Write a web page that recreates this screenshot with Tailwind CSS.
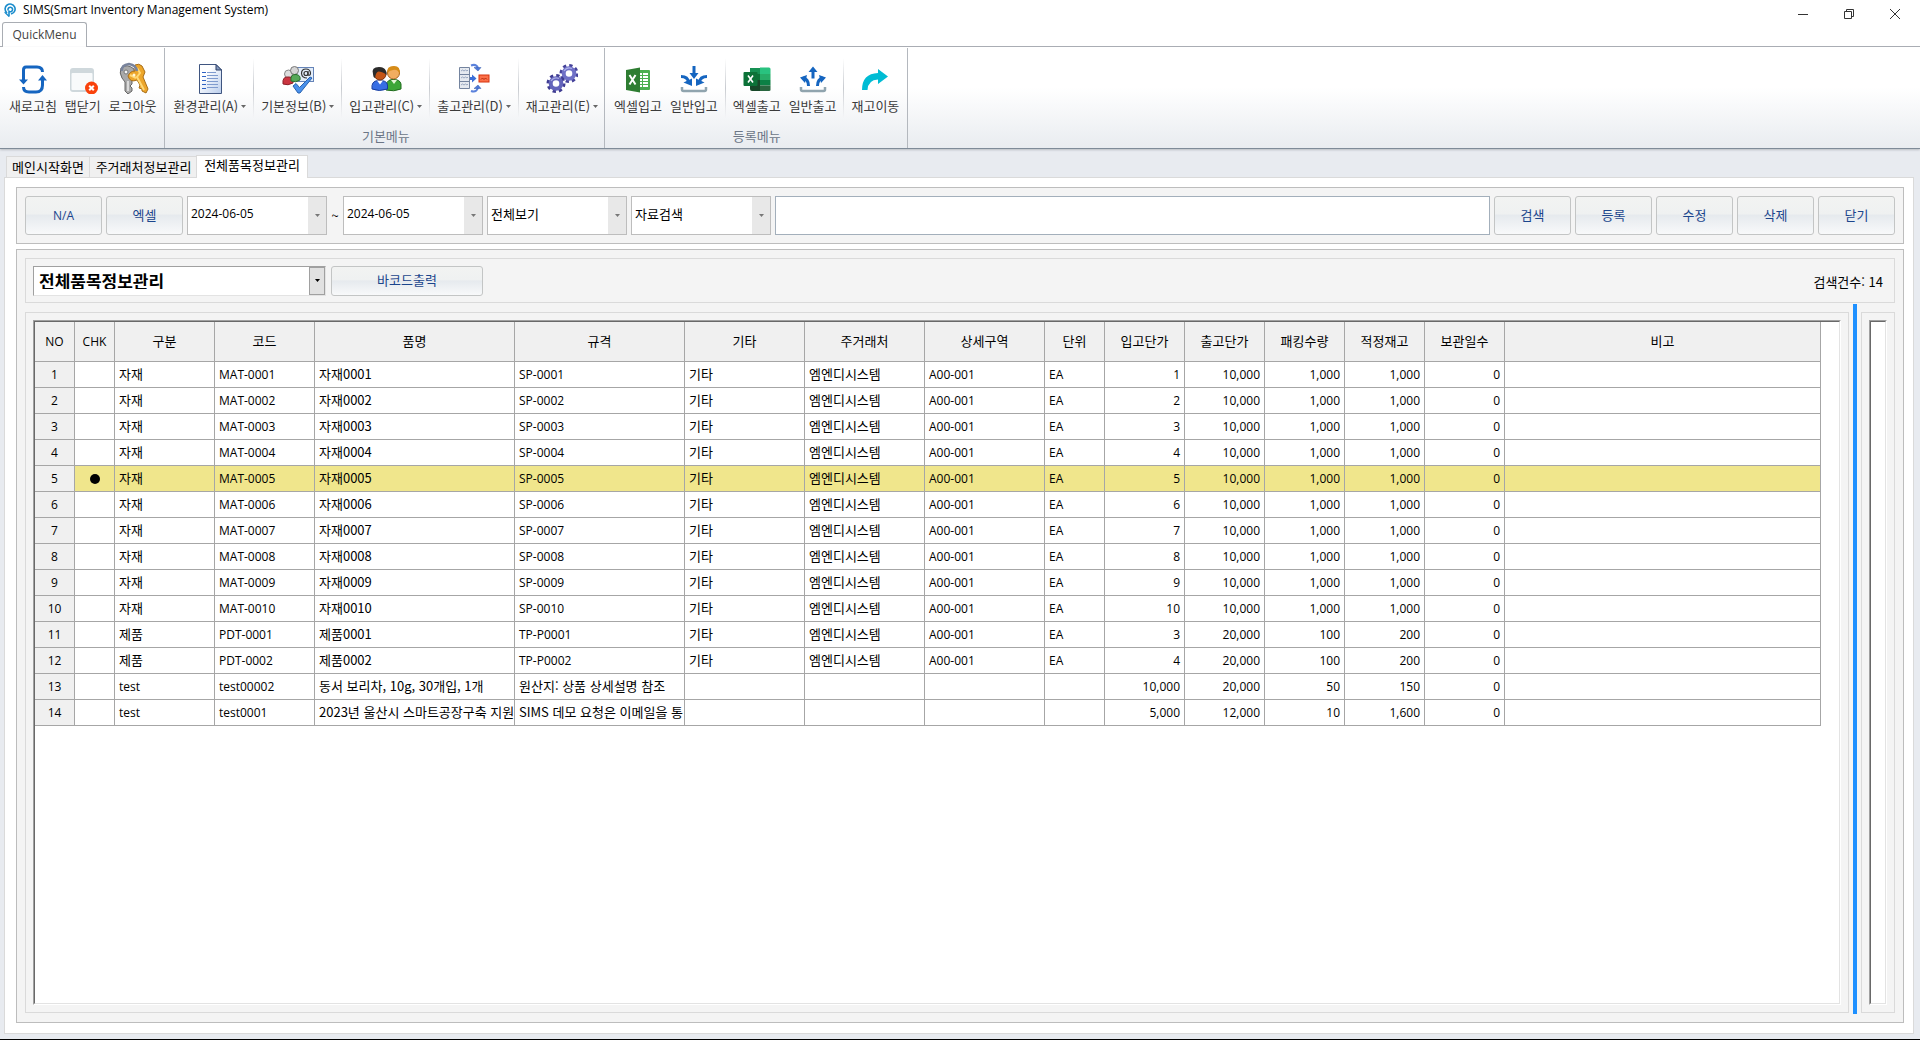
<!DOCTYPE html>
<html lang="ko">
<head>
    <meta charset="UTF-8">
    <meta name="viewport" content="width=device-width, initial-scale=1.0">
    <title>SIMS(Smart Inventory Management System)</title>
    <script src="https://cdn.jsdelivr.net/npm/@tailwindcss/browser@4"></script>
</head>
<body class="min-h-screen flex flex-col bg-[#e8ebf0] border-b border-black text-black text-[13px] leading-4 font-['Noto_Sans_CJK_KR',sans-serif]">
    <!-- Title bar -->
    <header class="bg-white h-[22px] flex justify-between">
        <div class="flex items-center pl-1 gap-[7px] h-5">
            <svg class="w-3 h-[14px]" viewBox="0 0 12 14" fill="none" stroke="#1a8ccc" stroke-width="1.6" stroke-linecap="round">
                <path d="M2.600 9.600A5 5 0 1 1 7.600 10.800"/>
                <path d="M5 8V13M5 8.400A2.300 2.300 0 1 0 4 6.800"/>
                <path d="M1 9.500L4.600 13" stroke-width="1.2"/>
            </svg>
            <h1 class="text-xs font-['Open_Sans','Noto_Sans_CJK_KR',sans-serif]">SIMS(Smart Inventory Management System)</h1>
        </div>
        <div class="flex h-7 pr-[2px] z-10">
            <button type="button" aria-label="최소화" class="w-[46px] flex justify-center items-center">
                <svg class="w-[10px] h-[10px]" viewBox="0 0 10 10" stroke="#333"><path d="M0 5.500H10"/></svg>
            </button>
            <button type="button" aria-label="이전 크기로" class="w-[46px] flex justify-center items-center">
                <svg class="w-[10px] h-[10px]" viewBox="0 0 10 10" fill="none" stroke="#333"><path d="M.5 2.500h7v7h-7zM2.500 2.500v-2h7v7h-2"/></svg>
            </button>
            <button type="button" aria-label="창 닫기" class="w-[46px] flex justify-center items-center">
                <svg class="w-[10px] h-[10px]" viewBox="0 0 10 10" stroke="#333"><path d="M0 0L10 10M10 0L0 10"/></svg>
            </button>
        </div>
    </header>

    <!-- Ribbon tab -->
    <div class="bg-white flex items-end h-[25px]">
        <div class="w-[2px] border-b border-[#a9adb3]"></div>
        <button type="button" class="h-[25px] w-[85px] text-xs text-[#444] border border-b-0 border-[#a9adb3] rounded-t-[3px] font-['Open_Sans','Noto_Sans_CJK_KR',sans-serif]">QuickMenu</button>
        <div class="flex-1 border-b border-[#a9adb3]"></div>
    </div>

    <!-- Ribbon -->
    <nav class="h-[102px] pt-px flex bg-linear-to-b from-white from-40% to-[#e9ecf0] border-b border-[#7f8b98] shadow-[0_1px_2px_#b8bcc2] text-[#3b3b3b]">
        <section class="pl-[5px] pr-[3px] pt-[10px] border-r border-[#b4b8be]">
            <div class="flex items-center h-[60px]">
                <button type="button" class="px-1 flex flex-col items-center gap-1">
                    <svg class="w-8 h-8" viewBox="0 0 32 32" fill="none" stroke="#1565c0" stroke-width="3">
                        <path d="M12.500 5H9Q6.500 5 6.500 8V19M10.500 5H20Q25.500 5 25.500 10"/>
                        <path d="M25.500 17V23Q25.500 30 19 30H12Q6.500 30 6.500 25"/>
                        <path d="M2 17.500h9L6.500 22.500zM21 18.500h9L25.500 13z" fill="#1565c0" stroke="none"/>
                    </svg>
                    <span>새로고침</span>
                </button>
                <button type="button" class="px-1 flex flex-col items-center gap-1">
                    <svg class="w-8 h-8" viewBox="0 0 32 32">
                        <rect x="3" y="6" width="24" height="24" rx="3" fill="#cfd8dc"/>
                        <rect x="4.500" y="11" width="21" height="17" rx="1" fill="#f8fafb"/>
                        <circle cx="24.500" cy="26" r="6.500" fill="#f9420c"/>
                        <path d="M22.200 23.700l4.600 4.600M26.800 23.700l-4.600 4.600" stroke="#fff" stroke-width="2"/>
                    </svg>
                    <span>탭닫기</span>
                </button>
                <button type="button" class="px-1 flex flex-col items-center gap-1">
                    <svg class="w-8 h-8" viewBox="0 0 32 32">
                        <path d="M4 6Q2 11 5 16L8 20V29L11 32L15 29V26L13 24L15 22V17Q19 12 17 7Q10 1 4 6z" fill="#a9a9a9" stroke="#666"/>
                        <path d="M11 19V29" stroke="#ececec" stroke-width="1.500"/>
                        <path d="M18 3Q22 1 25 4L28 10L26 15L31 27L29 31L25 29L25 27L22 26L23 23L20 18Q13 21 11 14Q13 9 18 9z" fill="#eda62b" stroke="#a86d16"/>
                        <path d="M20 6L23 11L20 15L27 28M13 13L19 16" stroke="#ffd977" stroke-width="2" fill="none"/>
                        <path d="M5 9Q4 3 12 2Q19 3 20 9" fill="none" stroke="#78839c" stroke-width="2.500"/>
                        <circle cx="9" cy="10" r="2" fill="#f6f6f6" stroke="#777"/>
                        <circle cx="17" cy="13" r="1.500" fill="#fff6d7"/>
                    </svg>
                    <span>로그아웃</span>
                </button>
            </div>
        </section>

        <section class="flex flex-col justify-between pl-[5px] pr-[2px] pt-[10px] border-r border-[#b4b8be]">
            <div class="flex items-center h-[60px]">
                <button type="button" class="px-1 flex flex-col items-center gap-1">
                    <svg class="w-8 h-8" viewBox="0 0 32 32">
                        <defs><linearGradient id="page" x2="1" y2="1"><stop offset=".3" stop-color="#fff"/><stop offset="1" stop-color="#b9cdec"/></linearGradient></defs>
                        <path d="M5.500 2.500H22L27.500 8V31.500H5.500z" fill="url(#page)" stroke="#3f5580"/>
                        <path d="M22 2.500V8H27.500z" fill="#8499bd" stroke="#2e4169"/>
                        <path d="M8 10.500h4M8 14.500h4M8 18.500h4M8 22.500h4M8 26.500h4" stroke="#2f62c4"/>
                        <path d="M13 10.500h9M13 13.500h11M13 16.500h11M13 19.500h11M13 22.500h11M13 25.500h11" stroke="#7f9bce"/>
                    </svg>
                    <span class="flex items-center gap-[3px] whitespace-nowrap">환경관리(A)<svg class="w-[5px] h-[3px]" viewBox="0 0 5 3" fill="#666"><path d="M0 0h5L2.500 3z"/></svg></span>
                </button>
                <div class="w-px h-[60px] mx-[3px] bg-linear-to-b from-transparent via-[#c8cbd0] to-transparent"></div>
                <button type="button" class="px-1 flex flex-col items-center gap-1">
                    <svg class="w-8 h-8" viewBox="0 0 32 32">
                        <rect x="14.500" y="5.500" width="17" height="14" fill="#e3edf9" stroke="#6584b8"/>
                        <circle cx="6.500" cy="12" r="4" fill="#ddd" stroke="#888"/>
                        <path d="M1 22Q0 14 7 15Q12 15 11 21Q6 24 1 22z" fill="#cb3540" stroke="#8c2029"/>
                        <circle cx="12.500" cy="8.500" r="4" fill="#d4d4d4" stroke="#777"/>
                        <path d="M9 19Q8 12 14 12.500Q19 13 18 18Q14 21 9 19z" fill="#55a858" stroke="#2b7130"/>
                        <g fill="none" stroke="#333" stroke-width="1.200"><circle cx="24" cy="11.500" r="2"/><path d="M26 9V13Q28.500 14 28.500 11Q28 7 24 7Q19.500 7 19.500 11.500Q20 16 25 16"/></g>
                        <path d="M11 24L14 21.500L17.500 25.500L28 15L30 16L18 31H16z" fill="#4a91ec" stroke="#2862ae"/>
                    </svg>
                    <span class="flex items-center gap-[3px] whitespace-nowrap">기본정보(B)<svg class="w-[5px] h-[3px]" viewBox="0 0 5 3" fill="#666"><path d="M0 0h5L2.500 3z"/></svg></span>
                </button>
                <div class="w-px h-[60px] mx-[3px] bg-linear-to-b from-transparent via-[#c8cbd0] to-transparent"></div>
                <button type="button" class="px-1 flex flex-col items-center gap-1">
                    <svg class="w-8 h-8" viewBox="0 0 32 32">
                        <path d="M16 28Q15 18 22 17.500Q30 17 31 22V27Q24 30 16 28z" fill="#3da637" stroke="#1e6b1c"/>
                        <circle cx="23.500" cy="11" r="6" fill="#f1ad60" stroke="#a86420"/>
                        <path d="M17.500 11Q16 4 24 4Q31 4 29.500 12Q28 7 23 8Q20 8 17.500 11z" fill="#d68c18"/>
                        <path d="M21 18l3 4 3-4z" fill="#e8f6d8"/>
                        <path d="M2 27Q1 19 8 18.500Q17 18 17.500 23V27Q9 30 2 27z" fill="#376ee4" stroke="#183c9c"/>
                        <path d="M7 18.500l3 4 3-4z" fill="#fff"/>
                        <circle cx="10" cy="12" r="6" fill="#c45516" stroke="#762f0c"/>
                        <path d="M3 12Q1 5 9 5Q17 5 16.500 13Q14 10 9 9.500Q6 9 5 16Q3 15 3 12z" fill="#2b2b2b"/>
                    </svg>
                    <span class="flex items-center gap-[3px] whitespace-nowrap">입고관리(C)<svg class="w-[5px] h-[3px]" viewBox="0 0 5 3" fill="#666"><path d="M0 0h5L2.500 3z"/></svg></span>
                </button>
                <div class="w-px h-[60px] mx-[3px] bg-linear-to-b from-transparent via-[#c8cbd0] to-transparent"></div>
                <button type="button" class="px-1 flex flex-col items-center gap-1">
                    <svg class="w-8 h-8" viewBox="0 0 32 32" fill="none">
                        <path d="M1.500 5.500h10v21h-10zM1.500 12.500h10M1.500 19.500h10" fill="#e6eaf0" stroke="#74849f"/>
                        <path d="M3 9l1.500-1 1.500 1 1.500-1L9 9l1-1M3 16l1.500-1 1.500 1 1.500-1L9 16l1-1M3 23l1.500-1 1.500 1 1.500-1L9 23l1-1" stroke="#9aa8bf"/>
                        <path d="M12 16.500h4" stroke="#3c6fd8" stroke-width="3"/>
                        <path d="M14 12.500l4.500 4-4.500 4z" fill="#3c6fd8"/>
                        <path d="M13 3.500Q18 1.500 20 6M13 29Q18 31 20 26" stroke="#5b82dc" stroke-width="2"/>
                        <path d="M16 5.500h7L20 9zM16 26.500h7L20 23z" fill="#4d78d8" stroke="#355bad" stroke-width=".5"/>
                        <rect x="21" y="13" width="10" height="7" fill="#fb7049" stroke="#d6330e"/>
                        <path d="M23 17.500l1.500-1.500 1.500 1.500 1.500-1.500 1.500 1.500" stroke="#b5290b"/>
                    </svg>
                    <span class="flex items-center gap-[3px] whitespace-nowrap">출고관리(D)<svg class="w-[5px] h-[3px]" viewBox="0 0 5 3" fill="#666"><path d="M0 0h5L2.500 3z"/></svg></span>
                </button>
                <div class="w-px h-[60px] mx-[3px] bg-linear-to-b from-transparent via-[#c8cbd0] to-transparent"></div>
                <button type="button" class="px-1 flex flex-col items-center gap-1">
                    <svg class="w-8 h-8" viewBox="0 0 32 32" fill="none">
                        <circle cx="23" cy="11.500" r="8" stroke="#45429a" stroke-width="3" stroke-dasharray="3.300 2.980"/>
                        <circle cx="23" cy="11.500" r="5.300" stroke="#6f70c6" stroke-width="4"/>
                        <path d="M18 9Q21 4.500 26 6.500" stroke="#aeb1ea" stroke-width="1.300"/>
                        <circle cx="10" cy="21.500" r="8" stroke="#3e3b91" stroke-width="3" stroke-dasharray="3.300 2.980"/>
                        <circle cx="10" cy="21.500" r="5.300" stroke="#6364bb" stroke-width="4"/>
                        <path d="M5 19Q8 14.500 13 16.500" stroke="#a5a8e4" stroke-width="1.300"/>
                    </svg>
                    <span class="flex items-center gap-[3px] whitespace-nowrap">재고관리(E)<svg class="w-[5px] h-[3px]" viewBox="0 0 5 3" fill="#666"><path d="M0 0h5L2.500 3z"/></svg></span>
                </button>
            </div>
            <h2 class="text-center text-[#6b7686] pb-1">기본메뉴</h2>
        </section>

        <section class="flex flex-col justify-between pl-[5px] pr-1 pt-[10px] border-r border-[#b4b8be]">
            <div class="flex items-center h-[60px]">
                <button type="button" class="px-1 flex flex-col items-center gap-1">
                    <svg class="w-8 h-8" viewBox="0 0 32 32">
                        <path d="M16 8h11q1 0 1 1v18q0 1-1 1H16z" fill="#4caf50"/>
                        <path d="M17 11h9v14h-9z" fill="#fff"/>
                        <path d="M17 13.500h9M17 16.500h9M17 19.500h9M17 22.500h9M20.500 11v14" stroke="#4caf50"/>
                        <path d="M4 8L18 5.500V30.500L4 28z" fill="#2e7d32"/>
                        <path d="M7.500 13l6 9.500M13.500 13l-6 9.500" stroke="#fff" stroke-width="2"/>
                    </svg>
                    <span>엑셀입고</span>
                </button>
                <button type="button" class="px-1 flex flex-col items-center gap-1">
                    <svg class="w-8 h-8" viewBox="0 0 32 32" fill="none">
                        <path d="M4 25v2.500q0 1.500 1.500 1.500h21q1.500 0 1.500-1.500V25" stroke="#90a4ae" stroke-width="2.500"/>
                        <path d="M16 4v9M3 14.500q7 0 7.500 6M29 14.500q-7 0-7.500 6" stroke="#1565c0" stroke-width="3"/>
                        <path d="M11.500 11h9L16 17zM5.500 20.500l8.500-4V24zM26.500 20.500L18 16.500V24z" fill="#1565c0"/>
                    </svg>
                    <span>일반입고</span>
                </button>
                <div class="w-px h-[60px] mx-[3px] bg-linear-to-b from-transparent via-[#c8cbd0] to-transparent"></div>
                <button type="button" class="px-1 flex flex-col items-center gap-1">
                    <svg class="w-8 h-8" viewBox="0 0 32 32">
                        <path d="M9 6h10v6H9z" fill="#169154"/>
                        <path d="M19 5.500h9q1.500 0 1.500 1.500v5H19z" fill="#29c27f"/>
                        <path d="M9 18h10v11h-8q-2 0-2-2z" fill="#18482a"/>
                        <path d="M19 12h10.500v6H19z" fill="#27ac68"/>
                        <path d="M9 12h10v6H9z" fill="#0c7238"/>
                        <path d="M19 18h10.500v5.500H19z" fill="#0c8045"/>
                        <path d="M19 23.500h10.500V28q0 1-1.500 1h-9z" fill="#29663f"/>
                        <rect x="2.500" y="10" width="14" height="14" rx="1" fill="#0c7238"/>
                        <path d="M7 13.500l5 7M12 13.500l-5 7" stroke="#fff" stroke-width="1.600"/>
                    </svg>
                    <span>엑셀출고</span>
                </button>
                <button type="button" class="px-1 flex flex-col items-center gap-1">
                    <svg class="w-8 h-8" viewBox="0 0 32 32" fill="none">
                        <path d="M4 25v2.500q0 1.500 1.500 1.500h21q1.500 0 1.500-1.500V25" stroke="#90a4ae" stroke-width="2.500"/>
                        <path d="M16 16.500V8M11.500 24q0-7-5.500-8M20.500 24q0-7 5.500-8" stroke="#1565c0" stroke-width="3"/>
                        <path d="M11.500 10h9L16 4.500zM3 15.500l7-2.500-2 8zM29 15.500L22 13l2 8z" fill="#1565c0"/>
                    </svg>
                    <span>일반출고</span>
                </button>
                <div class="w-px h-[60px] mx-[3px] bg-linear-to-b from-transparent via-[#c8cbd0] to-transparent"></div>
                <button type="button" class="px-1 flex flex-col items-center gap-1">
                    <svg class="w-8 h-8" viewBox="0 0 32 32" fill="#00bcd4">
                        <path d="M3 28Q3 11.500 19 11V7L29 14.500L19 22V17.500Q9 18 8.500 28z"/>
                    </svg>
                    <span>재고이동</span>
                </button>
            </div>
            <h2 class="text-center text-[#6b7686] pb-1">등록메뉴</h2>
        </section>
    </nav>

    <!-- Document tabs -->
    <div class="flex items-end pl-[6px] h-[29px] -mb-px z-10">
        <button type="button" class="h-[21px] w-[84px] mb-px bg-[#f0f0f0] border border-b-0 border-[#dadada]">메인시작화면</button>
        <button type="button" class="h-[21px] w-[106px] mb-px pl-px bg-[#f0f0f0] border border-x-0 border-b-0 border-[#dadada]">주거래처정보관리</button>
        <button type="button" class="h-[23px] w-[112px] pb-1 bg-white border border-b-0 border-[#dadada]">전체품목정보관리</button>
    </div>

    <!-- Document -->
    <main class="flex-1 flex flex-col gap-[5px] ml-1 mr-[6px] mb-[5px] pl-[11px] pr-[9px] pt-[9px] pb-[10px] bg-white border border-[#dadada]">
        <form class="flex gap-1 p-2 bg-[#f4f4f4] border border-[#bdbdbd] h-[57px]">
            <button type="button" class="w-[77px] text-[#1b458c] border border-[#c3c5c5] rounded-[3px] text-xs font-['Open_Sans',sans-serif] bg-[linear-gradient(#f2f3f2,#eff1f1_45%,#e6eaee_50%,#f8f9fa)]">N/A</button>
            <button type="button" class="w-[77px] pb-[2px] text-[#1b458c] border border-[#c3c5c5] rounded-[3px] bg-[linear-gradient(#f2f3f2,#eff1f1_45%,#e6eaee_50%,#f8f9fa)]">엑셀</button>
            <div class="w-[140px] flex bg-white border border-[#bdbdbd]">
                <input type="text" aria-label="시작일" value="2024-06-05" class="min-w-0 flex-1 pl-[3px] pb-1 text-xs font-['Open_Sans',sans-serif] outline-none">
                <button type="button" aria-label="시작일 선택" class="w-[18px] bg-[#e8e8e8] flex justify-center items-center"><svg class="w-[5px] h-[3px]" viewBox="0 0 5 3" fill="#777"><path d="M0 0h5L2.500 3z"/></svg></button>
            </div>
            <span class="w-2 self-center text-center">~</span>
            <div class="w-[140px] flex bg-white border border-[#bdbdbd]">
                <input type="text" aria-label="종료일" value="2024-06-05" class="min-w-0 flex-1 pl-[3px] pb-1 text-xs font-['Open_Sans',sans-serif] outline-none">
                <button type="button" aria-label="종료일 선택" class="w-[18px] bg-[#e8e8e8] flex justify-center items-center"><svg class="w-[5px] h-[3px]" viewBox="0 0 5 3" fill="#777"><path d="M0 0h5L2.500 3z"/></svg></button>
            </div>
            <div class="relative w-[140px] flex bg-white border border-[#bdbdbd]">
                <select aria-label="보기 구분" class="w-full appearance-none pl-[3px] pb-1 outline-none">
                    <option>전체보기</option>
                </select>
                <span class="absolute inset-y-0 right-0 w-[18px] bg-[#e8e8e8] flex justify-center items-center pointer-events-none"><svg class="w-[5px] h-[3px]" viewBox="0 0 5 3" fill="#777"><path d="M0 0h5L2.500 3z"/></svg></span>
            </div>
            <div class="relative w-[140px] flex bg-white border border-[#bdbdbd]">
                <select aria-label="검색 구분" class="w-full appearance-none pl-[3px] pb-1 outline-none">
                    <option>자료검색</option>
                </select>
                <span class="absolute inset-y-0 right-0 w-[18px] bg-[#e8e8e8] flex justify-center items-center pointer-events-none"><svg class="w-[5px] h-[3px]" viewBox="0 0 5 3" fill="#777"><path d="M0 0h5L2.500 3z"/></svg></span>
            </div>
            <input type="text" aria-label="검색어" class="min-w-0 flex-1 px-1 bg-white border border-[#a3afbb] outline-none">
            <button type="submit" class="w-[77px] pb-[2px] text-[#1b458c] border border-[#c3c5c5] rounded-[3px] bg-[linear-gradient(#f2f3f2,#eff1f1_45%,#e6eaee_50%,#f8f9fa)]">검색</button>
            <button type="button" class="w-[77px] pb-[2px] text-[#1b458c] border border-[#c3c5c5] rounded-[3px] bg-[linear-gradient(#f2f3f2,#eff1f1_45%,#e6eaee_50%,#f8f9fa)]">등록</button>
            <button type="button" class="w-[77px] pb-[2px] text-[#1b458c] border border-[#c3c5c5] rounded-[3px] bg-[linear-gradient(#f2f3f2,#eff1f1_45%,#e6eaee_50%,#f8f9fa)]">수정</button>
            <button type="button" class="w-[77px] pb-[2px] text-[#1b458c] border border-[#c3c5c5] rounded-[3px] bg-[linear-gradient(#f2f3f2,#eff1f1_45%,#e6eaee_50%,#f8f9fa)]">삭제</button>
            <button type="button" class="w-[77px] pb-[2px] text-[#1b458c] border border-[#c3c5c5] rounded-[3px] bg-[linear-gradient(#f2f3f2,#eff1f1_45%,#e6eaee_50%,#f8f9fa)]">닫기</button>
        </form>

        <div class="flex-1 flex flex-col p-2 bg-[#f4f4f4] border border-[#bdbdbd]">
            <div class="flex items-center gap-[5px] h-[45px] px-[7px] border border-[#dadada]">
                <div class="relative w-[293px] h-[30px] flex bg-white border border-t-[#a0a0a0] border-l-[#a0a0a0] border-[#e3e3e3]">
                    <select aria-label="화면 선택" class="w-full appearance-none pl-[5px] text-[17px] font-bold outline-none">
                        <option>전체품목정보관리</option>
                    </select>
                    <span class="absolute inset-y-0 right-0 w-4 bg-[#e1e1e1] border border-[#a0a0a0] flex justify-center items-center pointer-events-none"><svg class="w-[5px] h-[3px]" viewBox="0 0 5 3" fill="#000"><path d="M0 0h5L2.500 3z"/></svg></span>
                </div>
                <button type="button" class="w-[152px] h-[30px] pb-[2px] text-[#1b458c] border border-[#c3c5c5] rounded-[3px] bg-[linear-gradient(#f2f3f2,#eff1f1_45%,#e6eaee_50%,#f8f9fa)]">바코드출력</button>
                <p class="ml-auto pr-1 pt-[2px]">검색건수: 14</p>
            </div>

            <div class="flex-1 flex gap-1 pt-px">
                <div class="flex-1 mt-2 mb-px p-[7px] flex border border-[#dadada]">
                    <div class="flex-1 bg-white border border-t-[#a0a0a0] border-l-[#a0a0a0] border-[#fff]">
                        <div class="h-full pr-[18px] border border-t-[#696969] border-l-[#696969] border-[#e3e3e3]">
                            <table class="w-full table-fixed border-separate border-spacing-0">
                                <colgroup>
                                    <col class="w-10"><col class="w-10"><col class="w-[100px]"><col class="w-[100px]"><col class="w-[200px]"><col class="w-[170px]">
                                    <col class="w-[120px]"><col class="w-[120px]"><col class="w-[120px]"><col class="w-[60px]">
                                    <col class="w-20"><col class="w-20"><col class="w-20"><col class="w-20"><col class="w-20"><col>
                                </colgroup>
                                <thead><tr id="gridHead"></tr></thead>
                                <tbody id="gridBody"></tbody>
                            </table>
                        </div>
                    </div>
                </div>
                <div class="w-1 bg-[#1e90ff]"></div>
                <div class="w-[34px] mt-2 mb-px p-[7px] flex border border-[#dadada]">
                    <div class="flex-1 bg-white border border-t-[#a0a0a0] border-l-[#a0a0a0] border-[#fff]">
                        <div class="h-full border border-t-[#696969] border-l-[#696969] border-[#e3e3e3]"></div>
                    </div>
                </div>
            </div>
        </div>
    </main>

    <script>
        const columns = ['NO', 'CHK', '구분', '코드', '품명', '규격', '기타', '주거래처', '상세구역', '단위', '입고단가', '출고단가', '패킹수량', '적정재고', '보관일수', '비고'];
        const vendor = '엠엔디시스템';
        const rows = [];

        // Materials 1-10
        for (let i = 1; i <= 10; i++) {
            const no = String(i).padStart(4, '0');
            rows.push(['자재', 'MAT-' + no, '자재' + no, 'SP-' + no, '기타', vendor, 'A00-001', 'EA', String(i), '10,000', '1,000', '1,000', '0', '']);
        }
        rows.push(['제품', 'PDT-0001', '제품0001', 'TP-P0001', '기타', vendor, 'A00-001', 'EA', '3', '20,000', '100', '200', '0', '']);
        rows.push(['제품', 'PDT-0002', '제품0002', 'TP-P0002', '기타', vendor, 'A00-001', 'EA', '4', '20,000', '100', '200', '0', '']);
        rows.push(['test', 'test00002', '동서 보리차, 10g, 30개입, 1개', '원산지: 상품 상세설명 참조', '', '', '', '', '10,000', '20,000', '50', '150', '0', '']);
        rows.push(['test', 'test0001', '2023년 울산시 스마트공장구축 지원', 'SIMS 데모 요청은 이메일을 통', '', '', '', '', '5,000', '12,000', '10', '1,600', '0', '']);

        const selected = 4;

        // Latin-only text uses the smaller Latin face
        function face(text) {
            return /[가-힣]/.test(text) ? 'pb-[2px]' : "text-xs font-['Open_Sans',sans-serif]";
        }

        document.getElementById('gridHead').innerHTML = columns.map(name =>
            `<th scope="col" class="h-10 p-0 font-normal text-center bg-[#f0f0f0] border-r border-b border-[#a6a6a6] ${face(name)}">${name}</th>`
        ).join('');

        document.getElementById('gridBody').innerHTML = rows.map((row, i) => `
            <tr class="${i === selected ? 'bg-[#f0e68c]' : 'bg-white'}">
                <th scope="row" class="h-[26px] p-0 font-normal text-center bg-[#f0f0f0] border-r border-b border-[#a6a6a6] text-xs font-['Open_Sans',sans-serif]">${i + 1}</th>
                <td class="p-0 border-r border-b border-[#a6a6a6]">${i === selected ? '<span class="block mx-auto size-[10px] rounded-full bg-black"></span>' : ''}</td>
                ${row.map((text, c) => `<td class="h-[26px] px-1 py-0 overflow-hidden whitespace-nowrap border-r border-b border-[#a6a6a6] ${c >= 8 && c <= 12 ? 'text-right' : 'text-left'} ${face(text)}">${text}</td>`).join('')}
            </tr>
        `).join('');
    </script>
</body>
</html>
